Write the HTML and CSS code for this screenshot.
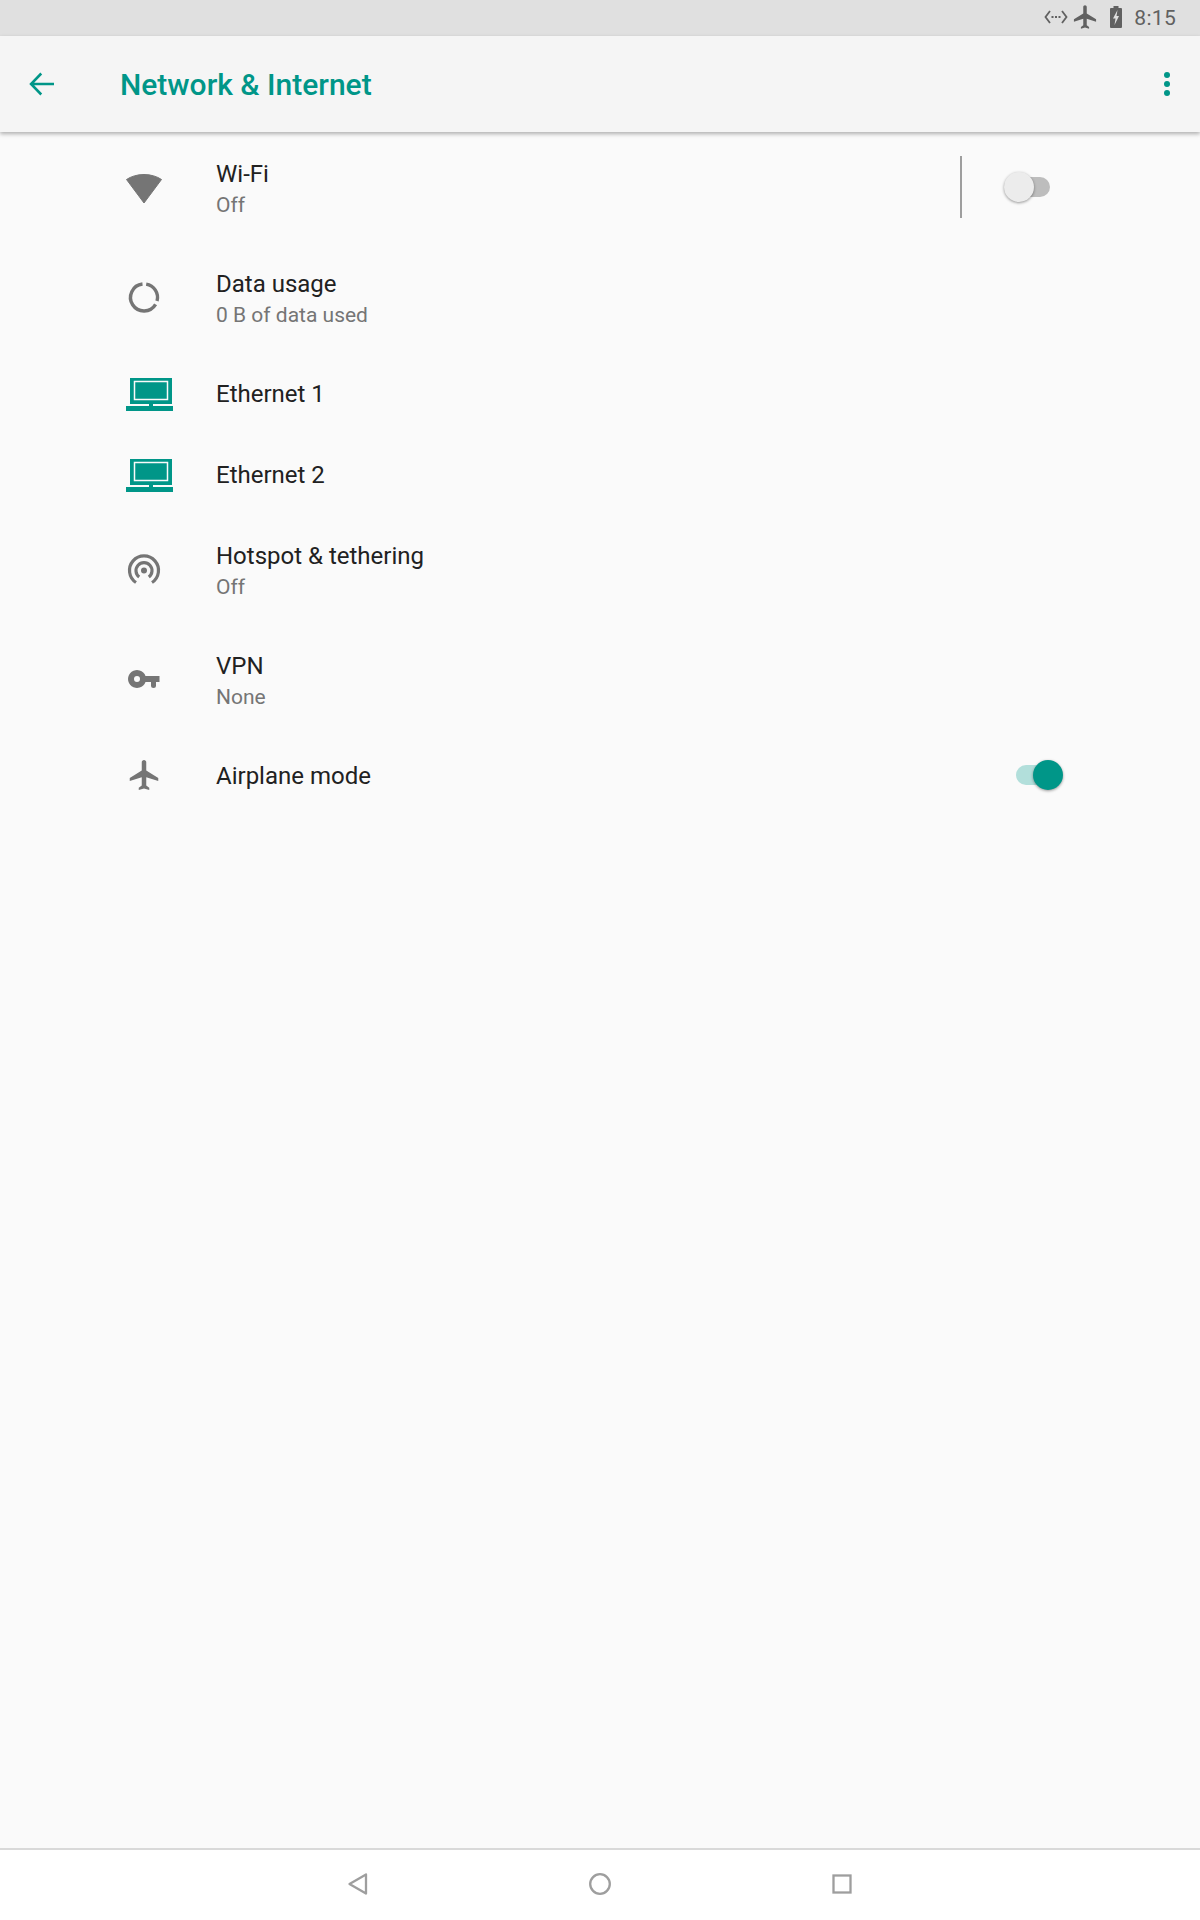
FILE: index.html
```html
<!DOCTYPE html>
<html lang="en">
<head>
<meta charset="utf-8">
<title>Network &amp; Internet</title>
<link rel="stylesheet" href="styles.css">
</head>
<body>
<div class="screen">
  <header class="statusbar">
    <svg class="st-code" viewBox="0 0 24 14" width="24" height="14"><path d="M6 1 1.500 7 6 13M18 1 22.500 7 18 13" fill="none" stroke="#616161" stroke-width="1.800"/><path d="M7.500 6h2v2h-2zM11 6h2v2h-2zM14.500 6h2v2h-2z" fill="#616161"/></svg>
    <svg class="st-plane" viewBox="0 0 24 24" width="28" height="28"><path d="M21 16v-2l-8-5V3.500C13 2.670 12.330 2 11.500 2S10 2.670 10 3.500V9l-8 5v2l8-2.500V19l-2 1.500V22l3.500-1 3.500 1v-1.500L13 19v-5.500l8 2.500z" fill="#616161" transform="translate(.5 0)"/></svg>
    <svg class="st-batt" viewBox="0 0 12 22" width="12" height="22"><path d="M3.500 0h5v2H11a1 1 0 0 1 1 1v18a1 1 0 0 1-1 1H1a1 1 0 0 1-1-1V3a1 1 0 0 1 1-1h2.500z" fill="#616161"/><path d="M7.500 4 3 12.500h2.500L4.500 19 9 10H6.500z" fill="#e0e0e0"/></svg>
    <span class="clock">8:15</span>
  </header>
  <div class="toolbar">
    <svg class="back" viewBox="0 0 24 24" width="36" height="36"><path d="M20 12H5M11.500 5 4.700 12l6.800 7" fill="none" stroke="#009688" stroke-width="1.700"/></svg>
    <h1 class="page-title">Network &amp; Internet</h1>
    <span class="more"><i></i><i></i><i></i></span>
  </div>
  <main class="list">
    <div class="row tall">
      <span class="icon"><svg viewBox="0 0 36 36" width="36" height="36"><path d="M.500 9.500C5 6.500 11 4.500 18 4.500s13 2 17.500 5L18 33z" transform="translate(0 -1)" fill="#757575" stroke="#757575" stroke-linejoin="round"/></svg></span>
      <div class="text"><div class="title">Wi-Fi</div><div class="sub">Off</div></div>
      <div class="wifi-end"><span class="divider"></span><span class="switch off"><span class="track"></span><span class="thumb"></span></span></div>
    </div>
    <div class="row tall">
      <span class="icon"><svg viewBox="0 0 36 36" width="36" height="36"><g fill="none" stroke="#757575" stroke-width="3.400"><path d="M20.200 3.130A13.500 13.500 0 0 1 31.040 20"/><path d="M29.600 23.400A13.500 13.500 0 1 1 16.500 3.050"/></g></svg></span>
      <div class="text"><div class="title">Data usage</div><div class="sub">0 B of data used</div></div>
    </div>
    <div class="row short">
      <span class="icon"><svg class="eth" viewBox="0 0 48 36" width="48" height="36"><path d="M4 1h42v26H4z" fill="#009688"/><path d="M8.500 4.500h33v18h-33z" fill="none" stroke="#fafafa" stroke-width="1.500"/><path d="M0 29h47v5H0z" fill="#009688"/><path d="M23 27h4v3h-4z" fill="#009688"/></svg></span>
      <div class="text"><div class="title">Ethernet 1</div></div>
    </div>
    <div class="row short">
      <span class="icon"><svg class="eth" viewBox="0 0 48 36" width="48" height="36"><path d="M4 1h42v26H4z" fill="#009688"/><path d="M8.500 4.500h33v18h-33z" fill="none" stroke="#fafafa" stroke-width="1.500"/><path d="M0 29h47v5H0z" fill="#009688"/><path d="M23 27h4v3h-4z" fill="#009688"/></svg></span>
      <div class="text"><div class="title">Ethernet 2</div></div>
    </div>
    <div class="row tall">
      <span class="icon"><svg viewBox="0 1 36 36" width="36" height="36"><g fill="none" stroke="#757575" stroke-width="3.200"><path d="M10 30.500a14.500 14.500 0 1 1 16 0"/><path d="M13.200 25a8 8 0 1 1 9.600 0"/></g><circle cx="18" cy="18.500" r="3" fill="#757575"/></svg></span>
      <div class="text"><div class="title">Hotspot &amp; tethering</div><div class="sub">Off</div></div>
    </div>
    <div class="row tall">
      <span class="icon"><svg viewBox="0 1 36 36" width="36" height="36"><path d="M19.500 14a9 9 0 1 0 0 6H25v3.500a2.500 2.500 0 0 0 5 0V20h3.500v-6zM11 20a3 3 0 1 1 0-6 3 3 0 0 1 0 6z" fill="#757575"/></svg></span>
      <div class="text"><div class="title">VPN</div><div class="sub">None</div></div>
    </div>
    <div class="row air">
      <span class="icon air-icon"><svg viewBox="0 0 24 24" width="36" height="36"><path d="M21 16v-2l-8-5V3.500C13 2.670 12.330 2 11.500 2S10 2.670 10 3.500V9l-8 5v2l8-2.500V19l-2 1.500V22l3.500-1 3.500 1v-1.500L13 19v-5.500l8 2.500z" fill="#757575" transform="translate(.5 0)"/></svg></span>
      <div class="text"><div class="title">Airplane mode</div></div>
      <span class="switch on"><span class="track"></span><span class="thumb"></span></span>
    </div>
  </main>
  <nav class="navbar">
    <svg class="nav-back" viewBox="0 0 24 24" width="24" height="24"><path d="M20 2.500 3.500 12 20 21.500z" fill="none" stroke="#9e9e9e" stroke-width="2.300" stroke-linejoin="round"/></svg>
    <svg viewBox="0 0 24 24" width="24" height="24"><circle cx="12" cy="12" r="9.800" fill="none" stroke="#9e9e9e" stroke-width="2.300"/></svg>
    <svg class="nav-recent" viewBox="0 0 24 24" width="24" height="24"><rect x="3.500" y="3.500" width="17" height="17" fill="none" stroke="#9e9e9e" stroke-width="2.300"/></svg>
  </nav>
</div>
</body>
</html>
```
FILE: styles.css
```css
* { box-sizing: border-box; }
html, body { margin: 0; padding: 0; }
body { width: 1200px; height: 1920px; overflow: hidden; font-family: Roboto, "Liberation Sans", sans-serif; background: #fafafa; }
.screen { width: 1200px; height: 1920px; display: flex; flex-direction: column; }
.statusbar { height: 36px; background: #e0e0e0; display: flex; align-items: center; justify-content: flex-end; padding: 0 24px 2px 0; flex: none; }
.st-code { margin-right: 3px; }
.st-plane { margin-right: 11px; }
.st-batt { margin-right: 12px; }
.clock { font-size: 21px; color: #616161; letter-spacing: .3px; margin-top: 2px; }
.toolbar { position: relative; z-index: 1; height: 96px; flex: none; background: #f5f5f5; display: flex; align-items: center; padding-left: 24px; box-shadow: 0 2px 4px rgba(0,0,0,.3); }
.back { flex: none; }
.page-title { margin: 0 0 0 60px; font-size: 30px; font-weight: 500; color: #009688; }
.more { margin-left: auto; margin-right: 30px; display: flex; flex-direction: column; gap: 3px; }
.more i { width: 6px; height: 6px; border-radius: 50%; background: #009688; display: block; }
.list { flex: 1; padding: 2px 0 0; }
.row { display: flex; align-items: center; padding-left: 126px; }
.tall { height: 110px; }
.short { height: 81px; }
.air { height: 80px; }
.icon { width: 36px; height: 36px; margin-right: 54px; flex: none; display: flex; }
.air-icon { margin-bottom: 3px; }
.eth { flex: none; }
.text { flex: 1; padding-bottom: 2px; }
.air .text { padding-bottom: 0; }
.title { font-size: 24px; line-height: 32px; color: #212121; }
.sub { font-size: 21px; line-height: 28px; margin-top: 1px; color: #757575; }
.wifi-end { display: flex; align-items: center; height: 62px; margin-bottom: 4px; }
.divider { width: 2px; height: 62px; background: #9e9e9e; }
.switch { position: relative; display: block; width: 48px; height: 32px; flex: none; }
.track { position: absolute; top: 6px; width: 46px; height: 20px; border-radius: 10px; }
.thumb { position: absolute; top: 1px; width: 30px; height: 30px; border-radius: 50%; box-shadow: 0 1px 3px rgba(0,0,0,.4); }
.off { margin-left: 40px; margin-right: 150px; }
.off .track { left: 2px; background: #bdbdbd; }
.off .thumb { left: 2px; background: #ececec; }
.on { margin-right: 137px; margin-bottom: 2px; }
.on .track { left: 1px; background: #b2dfdb; }
.on .thumb { right: 0; background: #009688; }
.navbar { height: 72px; flex: none; background: #fff; border-top: 2px solid #d9d9d9; display: flex; align-items: center; justify-content: center; gap: 218px; padding: 0 0 3px 3px; }
.nav-back { margin-left: -3px; }
.nav-recent { margin-left: 0; }
```
